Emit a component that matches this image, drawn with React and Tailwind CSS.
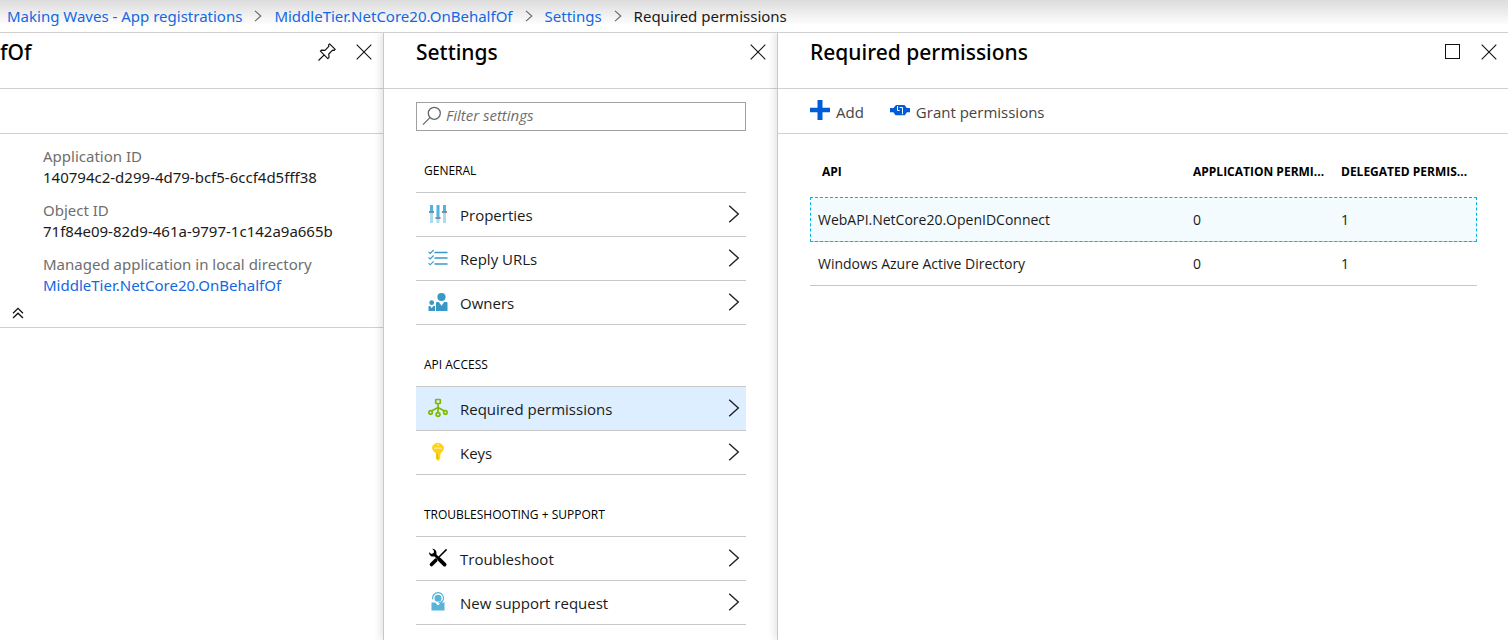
import React from "react";

function CloseIcon() {
  return (
    <svg viewBox="0 0 16 16" className="size-4" fill="none" stroke="#111" strokeWidth="1.1">
      <path d="M0.7 0.7 15.3 15.3M15.3 0.7 0.7 15.3" />
    </svg>
  );
}

function PinIcon() {
  return (
    <svg viewBox="0 0 18 18" className="size-[18px]" fill="none" stroke="#111" strokeWidth="1.2" strokeLinejoin="round">
      <path d="M0.5 17.5 6.2 11.8M11.6 0.8 17.2 6.4 16.2 7.4 14.6 7.2 10.8 11 11 14.6 9.8 15.6 2.4 8.2 3.4 7.2 7 7.4 10.8 3.4 10.6 1.8Z" />
    </svg>
  );
}

function MaximizeIcon() {
  return (
    <svg viewBox="0 0 16 16" className="size-4" fill="none" stroke="#111">
      <rect x="0.5" y="0.5" width="14" height="14" />
    </svg>
  );
}

function ChevronRight() {
  return (
    <svg viewBox="0 0 12 18" className="h-[18px] w-3" fill="none" stroke="#222" strokeWidth="1.4">
      <path d="M1.2 0.8 10.3 9 1.2 17.2" />
    </svg>
  );
}

function CrumbChevron() {
  return (
    <svg viewBox="0 0 8 12" className="h-3 w-2" fill="none" stroke="#666" strokeWidth="1.1">
      <path d="M1 0.8 6.8 6 1 11.2" />
    </svg>
  );
}

function CollapseIcon() {
  return (
    <svg viewBox="0 0 12 12" className="size-3" fill="none" stroke="#111" strokeWidth="1.3">
      <path d="M1 6.2 6 1.4 11 6.2M1 11 6 6.2 11 11" />
    </svg>
  );
}

function SearchIcon() {
  return (
    <svg viewBox="0 0 20 20" className="size-5" fill="none" stroke="#666" strokeWidth="1.3">
      <circle cx="12.3" cy="7.3" r="6" />
      <path d="M8 11.6 1 18.6" />
    </svg>
  );
}

function PropertiesIcon() {
  return (
    <svg viewBox="0 0 20 20" className="size-5">
      <g fill="#a9dcf0">
        <rect x="2" y="8" width="3" height="11" />
        <rect x="8.5" y="13" width="3" height="6" />
        <rect x="15" y="8" width="3" height="11" />
      </g>
      <g fill="#4fb4dc">
        <rect x="2" y="1" width="3" height="6" />
        <rect x="8.5" y="1" width="3" height="12" />
        <rect x="15" y="1" width="3" height="6" />
      </g>
      <g fill="#8a8a8a">
        <rect x="1" y="7" width="5" height="2" />
        <rect x="7.5" y="13" width="5" height="2" />
        <rect x="14" y="7" width="5" height="2" />
      </g>
    </svg>
  );
}

function ReplyIcon() {
  return (
    <svg viewBox="0 0 20 20" className="size-5" fill="none" stroke="#3999c6">
      <path strokeWidth="1.6" d="M6.5 4.5H19.5M6.5 10H19.5M6.5 16H19.5" />
      <path strokeWidth="1.1" d="M0.6 3.8 2.2 5.5 5.6 2M0.6 9.3 2.2 11 5.6 7.5M0.6 15.1 2.2 16.8 5.6 13.3" />
    </svg>
  );
}

function OwnersIcon() {
  return (
    <svg viewBox="0 0 20 20" className="size-5" fill="#3999c6">
      <circle cx="13.5" cy="5" r="4.1" />
      <path d="M8 19V11Q8 10 9 10H10.8L13.5 13.8 16.2 10H18.5Q19.5 10 19.5 11V19Z" />
      <circle cx="3.7" cy="10.7" r="2.4" />
      <path d="M0.5 19V14.6Q0.5 14 1.2 14H2.2L3.7 16.2 5.2 14H7V19Z" />
    </svg>
  );
}

function PermissionsIcon() {
  return (
    <svg viewBox="0 0 20 20" className="size-5" fill="none" stroke="#7fba00" strokeWidth="1.7">
      <rect x="7.7" y="1.5" width="4.6" height="4" rx="0.6" />
      <path d="M10 5.5V14.5M10 9.5 4 12.8M10 9.5 16 12.8" />
      <circle cx="2.6" cy="14.4" r="1.7" />
      <circle cx="10" cy="16.5" r="1.9" />
      <circle cx="17.4" cy="14.4" r="1.7" />
    </svg>
  );
}

function KeyIcon() {
  return (
    <svg viewBox="0 0 20 20" className="size-5">
      <path fill="#fcd116" d="M7.2 1.5Q10 0 12.8 1.5Q16 3.5 16 6.3Q15.6 9 12.6 11.2V12.4L11.8 13.2 12.6 14 11.8 15 12.6 16 10.2 18.9 8 16.8V11.2Q4.4 9 4 6.3Q4 3.5 7.2 1.5Z" />
      <rect x="6" y="5.6" width="8" height="1.2" rx="0.6" fill="#fff" opacity="0.6" />
      <path fill="#dba80a" d="M8.8 11.5H9.6V17.4L8.8 16.8Z" />
      <circle cx="10" cy="2.8" r="0.9" fill="#fff" opacity="0.7" />
    </svg>
  );
}

function TroubleshootIcon() {
  return (
    <svg viewBox="0 0 20 20" className="size-5" fill="none" stroke="#000">
      <path strokeWidth="1.5" d="M18.6 1.4 10 10" />
      <path strokeWidth="3.6" strokeLinecap="round" d="M7.8 12.2 3.5 16.5" />
      <path strokeWidth="2.8" d="M6 6 11 11" />
      <path strokeWidth="3.8" strokeLinecap="round" d="M11.6 11.6 16.6 16.6" />
      <path fill="#000" stroke="none" d="M4.2 0.8A4.2 4.2 0 0 1 8.5 5.3L8 7.8 5.5 8.6A4.2 4.2 0 0 1 1 4.2L3.5 6 5.7 5 6 2.8Z" />
    </svg>
  );
}

function SupportIcon() {
  return (
    <svg viewBox="0 0 20 20" className="size-5">
      <path fill="#59b4d9" d="M3.5 10.5H7.2L10 13.4 12.8 10.5H16.5V18.5H3.5Z" />
      <circle cx="10" cy="6.2" r="3.5" fill="#59b4d9" />
      <path d="M4.8 7.4A5.4 5.4 0 1 1 14.8 8.6Q13.6 10.8 10.6 10.6" fill="none" stroke="#59b4d9" strokeWidth="1.2" />
    </svg>
  );
}

function AddIcon() {
  return (
    <svg viewBox="0 0 20 20" className="size-5" fill="#015cda">
      <path d="M7.5 0H12.5V7.7H20V12.3H12.5V20H7.5V12.3H0V7.7H7.5Z" />
    </svg>
  );
}

function GrantIcon() {
  return (
    <svg viewBox="0 0 20 20" className="size-5">
      <path fill="#015cda" d="M0 8H3.5L6 5H14.5L16.8 8H20V12.2H17L14.8 15.2H5.5L3.4 12.2H0Z" />
      <path fill="none" stroke="#fff" strokeWidth="1" d="M7.5 6V10.5H9.6M9.6 7.5H12.5V14.2" />
    </svg>
  );
}

const groups = [
  {
    title: "GENERAL",
    items: [
      { label: "Properties", Icon: PropertiesIcon },
      { label: "Reply URLs", Icon: ReplyIcon },
      { label: "Owners", Icon: OwnersIcon },
    ],
  },
  {
    title: "API ACCESS",
    items: [
      { label: "Required permissions", Icon: PermissionsIcon, active: true },
      { label: "Keys", Icon: KeyIcon },
    ],
  },
  {
    title: "TROUBLESHOOTING + SUPPORT",
    items: [
      { label: "Troubleshoot", Icon: TroubleshootIcon },
      { label: "New support request", Icon: SupportIcon },
    ],
  },
];

const crumbs = ["Making Waves - App registrations", "MiddleTier.NetCore20.OnBehalfOf", "Settings"];

const apis = [
  { name: "WebAPI.NetCore20.OpenIDConnect", app: 0, delegated: 1, focused: true },
  { name: "Windows Azure Active Directory", app: 0, delegated: 1 },
];

function BladeHeader({ title, inset, children }) {
  return (
    <header className="h-14 border-b border-[#d0d0d0]">
      <div className={`flex h-[38px] items-center justify-between pr-[11px] ${inset ? "pl-8" : ""}`}>
        <h2 className="font-['Noto_Sans',sans-serif] text-[21px] leading-7 font-medium text-black">{title}</h2>
        <div className="flex items-center gap-5">{children}</div>
      </div>
    </header>
  );
}

function Property({ label, children }) {
  return (
    <div>
      <dt className="text-[#6e6e6e]">{label}</dt>
      <dd>{children}</dd>
    </div>
  );
}

export default function App() {
  return (
    <div className="flex min-h-screen flex-col overflow-hidden bg-white font-['Open_Sans','Noto_Sans',sans-serif] text-[15px] leading-[21px] text-[#1a1a1a]">
      <nav aria-label="Breadcrumb" className="relative z-10 h-[33px] border-b border-[#d0d0d0] bg-linear-to-b from-[#dcdcdc] to-white to-80% font-['Noto_Sans',sans-serif]">
        <ol className="flex h-8 items-center gap-3 pl-[7px] whitespace-nowrap">
          {crumbs.map((c) => (
            <li key={c} className="flex items-center gap-3">
              <a href="#" className="text-[#1268e3]">{c}</a>
              <CrumbChevron />
            </li>
          ))}
          <li aria-current="page">Required permissions</li>
        </ol>
      </nav>

      <main className="flex flex-1">
        <section className="w-[383px] shrink-0">
          <BladeHeader title="fOf">
            <button aria-label="Pin"><PinIcon /></button>
            <button aria-label="Close"><CloseIcon /></button>
          </BladeHeader>
          <div className="h-[45px] border-b border-[#d0d0d0]" />
          <div className="border-b border-[#d0d0d0]">
            <dl className="flex flex-col gap-3 pt-3 pl-[43px] font-['Noto_Sans',sans-serif]">
              <Property label="Application ID">140794c2-d299-4d79-bcf5-6ccf4d5fff38</Property>
              <Property label="Object ID">71f84e09-82d9-461a-9797-1c142a9a665b</Property>
              <Property label="Managed application in local directory">
                <a href="#" className="text-[#1268e3]">MiddleTier.NetCore20.OnBehalfOf</a>
              </Property>
            </dl>
            <button aria-label="Collapse" className="flex h-[31px] items-center px-3 pt-0.5">
              <CollapseIcon />
            </button>
          </div>
        </section>

        <section className="relative w-[394px] shrink-0 border-l border-[#c8c8c8] bg-white pb-[15px] shadow-[-2px_0_8px_rgba(0,0,0,0.12)]">
          <BladeHeader title="Settings" inset>
            <button aria-label="Close"><CloseIcon /></button>
          </BladeHeader>
          <div className="pt-[13px] pr-[31px] pl-8">
            <label className="flex h-[29px] items-center gap-1 border border-[#a0a0a0] pb-0.5 pl-[5px]">
              <SearchIcon />
              <input
                type="text"
                aria-label="Filter settings"
                placeholder="Filter settings"
                className="min-w-0 flex-1 text-[15px] outline-none placeholder:text-[#6e6e6e] placeholder:italic"
              />
            </label>
            {groups.map((g) => (
              <div key={g.title}>
                <h3 className="h-[62px] border-b border-[#c8c8c8] pt-[30px] pl-2 text-[12px] leading-5 text-black">{g.title}</h3>
                <ul>
                  {g.items.map(({ label, Icon, active }) => (
                    <li key={label}>
                      <button
                        className={`flex h-11 w-full items-center gap-3 border-b border-[#c8c8c8] pr-[6px] pb-0.5 pl-3 text-left ${active ? "bg-[#dceeff]" : ""}`}
                      >
                        <Icon />
                        <span className="flex-1 pt-1">{label}</span>
                        <ChevronRight />
                      </button>
                    </li>
                  ))}
                </ul>
              </div>
            ))}
          </div>
        </section>

        <section className="relative min-w-0 flex-1 border-l border-[#c8c8c8] bg-white shadow-[-2px_0_8px_rgba(0,0,0,0.12)]">
          <BladeHeader title="Required permissions" inset>
            <button aria-label="Maximize"><MaximizeIcon /></button>
            <button aria-label="Close"><CloseIcon /></button>
          </BladeHeader>
          <div className="flex h-[45px] items-center gap-[26px] border-b border-[#d0d0d0] pb-0.5 pl-8 text-[#444]">
            <button className="flex items-center gap-[6px]">
              <AddIcon />
              <span className="pt-1">Add</span>
            </button>
            <button className="flex items-center gap-[6px]">
              <GrantIcon />
              <span className="pt-1">Grant permissions</span>
            </button>
          </div>
          <div className="pr-[31px] pl-8">
            <table className="w-full table-fixed border-separate border-spacing-0 text-left text-[14px]">
              <thead>
                <tr className="h-[63px] text-[12px] whitespace-nowrap text-black">
                  <th className="pt-3 pl-3 font-bold">API</th>
                  <th className="w-[148px] pt-3 font-bold">APPLICATION PERMI...</th>
                  <th className="w-[136px] pt-3 font-bold">DELEGATED PERMIS...</th>
                </tr>
              </thead>
              <tbody>
                {apis.map((a) => (
                  <tr
                    key={a.name}
                    className={a.focused ? "h-[45px] bg-[#f3fbfe] outline-1 -outline-offset-1 outline-[#00b4ea] outline-dashed" : "h-11"}
                  >
                    <td className="border-b border-[#c8c8c8] pl-2">{a.name}</td>
                    <td className="border-b border-[#c8c8c8]">{a.app}</td>
                    <td className="border-b border-[#c8c8c8]">{a.delegated}</td>
                  </tr>
                ))}
              </tbody>
            </table>
          </div>
        </section>
      </main>
    </div>
  );
}
